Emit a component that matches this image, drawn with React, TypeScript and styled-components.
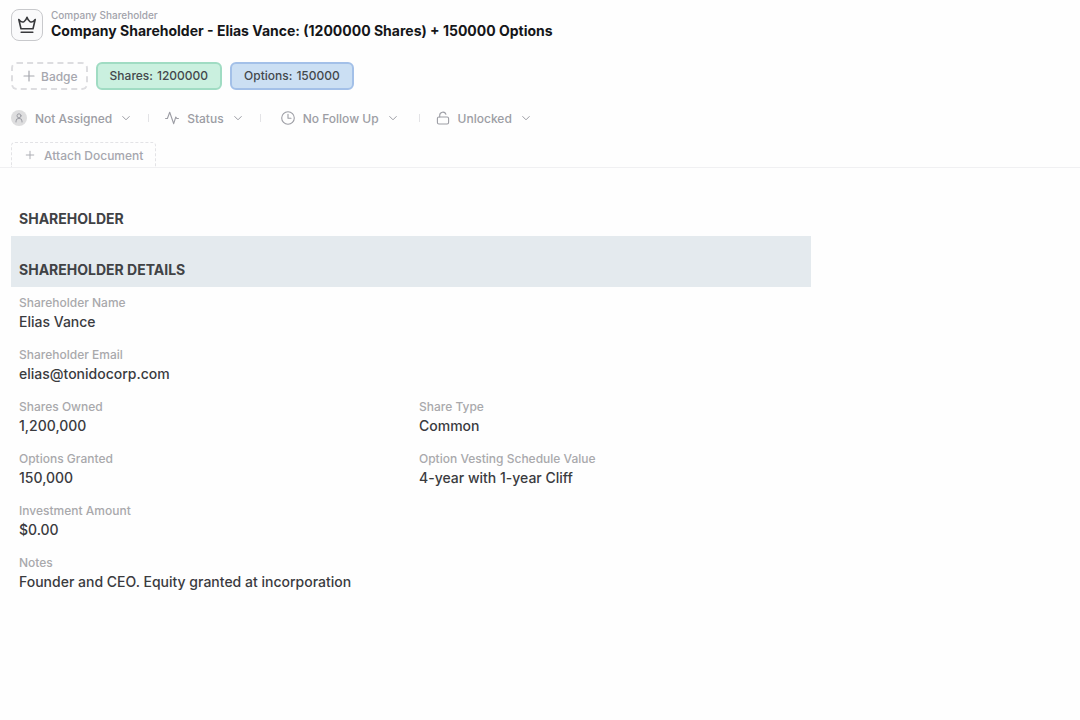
import React from "react";
import styled, { createGlobalStyle } from "styled-components";

const GlobalStyle = createGlobalStyle`
  * { box-sizing: border-box; }
  body {
    margin: 0;
    background: #fefefe;
    color: #3a3b3e;
    font-family: Inter, "Liberation Sans", sans-serif;
  }
  button { font-family: inherit; cursor: pointer; }
  svg { display: block; flex: none; }
`;

const Header = styled.header`
  display: flex;
  align-items: center;
  gap: 8px;
  padding: 8px 11px 0;
`;

const RecordIcon = styled.div`
  display: grid;
  place-items: center;
  width: 32px;
  height: 32px;
  border: 1px solid #c8c9cc;
  border-radius: 8px;
  background: #fafafb;
  color: #38393c;
`;

const RecordType = styled.div`
  font-size: 10px;
  line-height: 14px;
  font-weight: 500;
  color: #a2a3ab;
`;

const RecordTitle = styled.h1`
  margin: 0;
  padding-bottom: 2px;
  font-size: 14px;
  line-height: 18px;
  font-weight: 700;
  color: #151619;
`;

const Badges = styled.div`
  display: flex;
  flex-wrap: wrap;
  gap: 8px;
  padding: 20px 11px 0;
`;

const badgeTones = {
  green: { fill: "#caf0df", line: "#a0dcc3" },
  blue: { fill: "#cbdff3", line: "#a3c0e8" },
};

const Badge = styled.span<{ $tone: keyof typeof badgeTones }>`
  display: flex;
  gap: 4px;
  height: 28px;
  padding: 0 12px;
  border: 2px solid ${(p) => badgeTones[p.$tone].line};
  border-radius: 6px;
  background: ${(p) => badgeTones[p.$tone].fill};
  font-size: 12px;
  line-height: 24px;
  font-weight: 500;
  color: #43484c;
`;

const AddBadge = styled.button`
  display: flex;
  align-items: center;
  gap: 4px;
  height: 28px;
  padding: 0 8px;
  border: 2px dashed #dddde0;
  border-radius: 6px;
  background: none;
  font-size: 12px;
  font-weight: 500;
  color: #a6a7ae;
`;

const Controls = styled.div`
  display: flex;
  flex-wrap: wrap;
  align-items: center;
  gap: 16px;
  padding: 18px 11px 0;
`;

const Control = styled.button<{ $inset?: number }>`
  display: flex;
  align-items: center;
  gap: 8px;
  height: 20px;
  padding: 0 ${(p) => p.$inset ?? 0}px;
  border: 0;
  background: none;
  font-size: 12px;
  font-weight: 500;
  color: #9c9da4;
`;

const Divider = styled.span`
  width: 1px;
  height: 8px;
  background: #e3e3e6;
`;

const Tabs = styled.div`
  display: flex;
  padding: 14px 11px 0;
  border-bottom: 1px solid #f0f0f2;
`;

const AttachTab = styled.button`
  display: flex;
  align-items: center;
  gap: 8px;
  height: 25px;
  padding: 0 12px;
  border: 1px dashed #e3e3e6;
  border-bottom: 0;
  border-radius: 4px 4px 0 0;
  background: none;
  font-size: 12px;
  font-weight: 500;
  color: #a6a7ae;
`;

const Main = styled.main`
  max-width: 822px;
  padding: 34px 11px;
`;

const SectionTitle = styled.h2`
  margin: 0;
  padding: 8px;
  font-size: 14px;
  line-height: 18px;
  font-weight: 700;
  color: #404245;
`;

const SectionBand = styled.div`
  padding-top: 17px;
  background: #e4eaee;
`;

const Fields = styled.dl`
  display: grid;
  grid-template-columns: 1fr 1fr;
  margin: 0;
`;

const Field = styled.div<{ $wide?: boolean }>`
  grid-column: ${(p) => (p.$wide ? "1 / -1" : "auto")};
  height: 52px;
  padding: 7px 8px 0;
`;

const Label = styled.dt`
  font-size: 12px;
  line-height: 18px;
  font-weight: 500;
  color: #a9a9ac;
`;

const Value = styled.dd`
  margin: 0;
  font-size: 14px;
  line-height: 20px;
  font-weight: 500;
`;

const stroke = {
  fill: "none",
  stroke: "currentColor",
  strokeLinecap: "round" as const,
  strokeLinejoin: "round" as const,
  "aria-hidden": true,
};

const CrownIcon = () => (
  <svg width="20" height="20" viewBox="0 0 20 20" {...stroke} strokeWidth="1.6">
    <path d="M4 13.700 1.800 4.500c1.600 2.200 3.500 3.100 5.300 2.100C8.500 5.800 9.400 4.200 10 2.300c.6 1.900 1.500 3.500 2.900 4.300 1.800 1 3.700.1 5.300-2.100L16 13.700zM4.200 17.300h11.600" />
  </svg>
);

const PlusIcon = ({ size }: { size: number }) => (
  <svg width={size} height={size} viewBox="0 0 16 16" {...stroke} strokeWidth="1.2">
    <path d="M8 3v10M3 8h10" />
  </svg>
);

const ChevronIcon = () => (
  <svg width="12" height="12" viewBox="0 0 12 12" {...stroke} strokeWidth="1">
    <path d="M2.700 4.500 6 7.800l3.300-3.300" />
  </svg>
);

const AvatarIcon = () => (
  <svg width="16" height="16" viewBox="0 0 16 16" {...stroke}>
    <circle cx="8" cy="8" r="8" fill="#dededf" stroke="none" />
    <circle cx="8" cy="5.8" r="2" />
    <path d="M5 12V11a3 2.6 0 0 1 6 0v1" />
  </svg>
);

const ActivityIcon = () => (
  <svg width="14" height="14" viewBox="0 0 14 14" {...stroke} strokeWidth="1.1">
    <path d="M.6 7.500h1.800L4.700 1.300l4 11.400L10.800 6l1 1.500h1.600" />
  </svg>
);

const ClockIcon = () => (
  <svg width="14" height="14" viewBox="0 0 14 14" {...stroke} strokeWidth="1.1">
    <circle cx="7" cy="7" r="6.3" />
    <path d="M7 3.200v4h3" />
  </svg>
);

const UnlockIcon = () => (
  <svg width="14" height="14" viewBox="0 0 14 14" {...stroke} strokeWidth="1.1">
    <rect x="1.4" y="6" width="11.200" height="7" rx="1.5" />
    <path d="M3.700 6V4.400a3.200 3.200 0 0 1 6.200-1.200" />
  </svg>
);

const controls = [
  { label: "Not Assigned", Icon: AvatarIcon },
  { label: "Status", Icon: ActivityIcon },
  { label: "No Follow Up", Icon: ClockIcon, inset: 4 },
  { label: "Unlocked", Icon: UnlockIcon },
];

const fields = [
  { label: "Shareholder Name", value: "Elias Vance", wide: true },
  { label: "Shareholder Email", value: "elias@tonidocorp.com", wide: true },
  { label: "Shares Owned", value: "1,200,000" },
  { label: "Share Type", value: "Common" },
  { label: "Options Granted", value: "150,000" },
  { label: "Option Vesting Schedule Value", value: "4-year with 1-year Cliff" },
  { label: "Investment Amount", value: "$0.00", wide: true },
  { label: "Notes", value: "Founder and CEO. Equity granted at incorporation", wide: true },
];

export default function App() {
  return (
    <>
      <GlobalStyle />
      <Header>
        <RecordIcon><CrownIcon /></RecordIcon>
        <div>
          <RecordType>Company Shareholder</RecordType>
          <RecordTitle>Company Shareholder - Elias Vance: (1200000 Shares) + 150000 Options</RecordTitle>
        </div>
      </Header>
      <Badges>
        <AddBadge type="button"><PlusIcon size={16} />Badge</AddBadge>
        <Badge $tone="green"><span>Shares:</span> <span>1200000</span></Badge>
        <Badge $tone="blue"><span>Options:</span> <span>150000</span></Badge>
      </Badges>
      <Controls>
        {controls.map(({ label, Icon, inset }, i) => (
          <React.Fragment key={label}>
            {i > 0 && <Divider />}
            <Control type="button" $inset={inset}>
              <Icon />
              {label}
              <ChevronIcon />
            </Control>
          </React.Fragment>
        ))}
      </Controls>
      <Tabs>
        <AttachTab type="button"><PlusIcon size={12} />Attach Document</AttachTab>
      </Tabs>
      <Main>
        <SectionTitle>SHAREHOLDER</SectionTitle>
        <SectionBand>
          <SectionTitle>SHAREHOLDER DETAILS</SectionTitle>
        </SectionBand>
        <Fields>
          {fields.map(({ label, value, wide }) => (
            <Field key={label} $wide={wide}>
              <Label>{label}</Label>
              <Value>{value}</Value>
            </Field>
          ))}
        </Fields>
      </Main>
    </>
  );
}
